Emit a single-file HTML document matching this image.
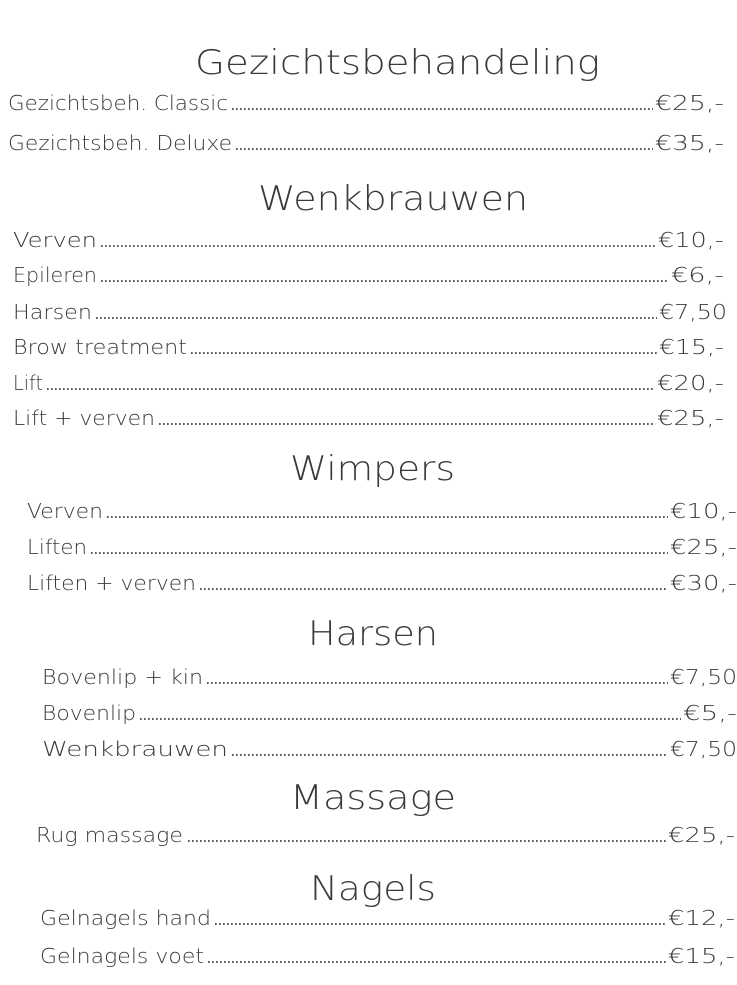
<!DOCTYPE html>
<html><head><meta charset="utf-8"><style>
html,body{margin:0;padding:0;background:#fff;width:737px;height:985px;overflow:hidden}
svg{display:block}
text{font-family:"DejaVu Sans","Liberation Sans",sans-serif;fill:#3a3a3a;font-weight:200}
.h{font-size:34px}
.r{font-size:20px}
line{stroke:#444;stroke-width:1.7;stroke-dasharray:1.7,2.3}
</style></head><body>
<svg width="737" height="985" viewBox="0 0 737 985">
<text class="h" x="195" y="74" textLength="405" lengthAdjust="spacingAndGlyphs">Gezichtsbehandeling</text>
<text class="h" x="258" y="210" textLength="270" lengthAdjust="spacingAndGlyphs">Wenkbrauwen</text>
<text class="h" x="290" y="480" textLength="165" lengthAdjust="spacingAndGlyphs">Wimpers</text>
<text class="h" x="308" y="645" textLength="130" lengthAdjust="spacingAndGlyphs">Harsen</text>
<text class="h" x="290" y="809" textLength="166" lengthAdjust="spacingAndGlyphs">Massage</text>
<text class="h" x="310" y="900" textLength="126" lengthAdjust="spacingAndGlyphs">Nagels</text>

<g class="rows">
<text class="r" x="8" y="110" textLength="220" lengthAdjust="spacingAndGlyphs">Gezichtsbeh. Classic</text><line x1="232" x2="653" y1="109" y2="109"/><text class="r" x="655" y="110" textLength="69" lengthAdjust="spacingAndGlyphs">€25,-</text>
<text class="r" x="8" y="150" textLength="224" lengthAdjust="spacingAndGlyphs">Gezichtsbeh. Deluxe</text><line x1="236" x2="653" y1="149" y2="149"/><text class="r" x="655" y="150" textLength="69" lengthAdjust="spacingAndGlyphs">€35,-</text>

<text class="r" x="13" y="247" textLength="84" lengthAdjust="spacingAndGlyphs">Verven</text><line x1="101" x2="656" y1="246" y2="246"/><text class="r" x="658" y="247" textLength="66" lengthAdjust="spacingAndGlyphs">€10,-</text>
<text class="r" x="13" y="282" textLength="84" lengthAdjust="spacingAndGlyphs">Epileren</text><line x1="101" x2="669" y1="281" y2="281"/><text class="r" x="671" y="282" textLength="53" lengthAdjust="spacingAndGlyphs">€6,-</text>
<text class="r" x="13" y="319" textLength="79" lengthAdjust="spacingAndGlyphs">Harsen</text><line x1="96" x2="657" y1="318" y2="318"/><text class="r" x="659" y="319" textLength="68" lengthAdjust="spacingAndGlyphs">€7,50</text>
<text class="r" x="13" y="354" textLength="174" lengthAdjust="spacingAndGlyphs">Brow treatment</text><line x1="191" x2="657" y1="353" y2="353"/><text class="r" x="659" y="354" textLength="65" lengthAdjust="spacingAndGlyphs">€15,-</text>
<text class="r" x="13" y="390" textLength="30" lengthAdjust="spacingAndGlyphs">Lift</text><line x1="47" x2="655" y1="389" y2="389"/><text class="r" x="657" y="390" textLength="67" lengthAdjust="spacingAndGlyphs">€20,-</text>
<text class="r" x="13" y="425" textLength="142" lengthAdjust="spacingAndGlyphs">Lift + verven</text><line x1="159" x2="655" y1="424" y2="424"/><text class="r" x="657" y="425" textLength="67" lengthAdjust="spacingAndGlyphs">€25,-</text>

<text class="r" x="27" y="518" textLength="76" lengthAdjust="spacingAndGlyphs">Verven</text><line x1="107" x2="668" y1="517" y2="517"/><text class="r" x="670" y="518" textLength="67" lengthAdjust="spacingAndGlyphs">€10,-</text>
<text class="r" x="27" y="554" textLength="60" lengthAdjust="spacingAndGlyphs">Liften</text><line x1="91" x2="668" y1="553" y2="553"/><text class="r" x="670" y="554" textLength="67" lengthAdjust="spacingAndGlyphs">€25,-</text>
<text class="r" x="27" y="590" textLength="169" lengthAdjust="spacingAndGlyphs">Liften + verven</text><line x1="200" x2="668" y1="589" y2="589"/><text class="r" x="670" y="590" textLength="67" lengthAdjust="spacingAndGlyphs">€30,-</text>

<text class="r" x="42" y="684" textLength="161" lengthAdjust="spacingAndGlyphs">Bovenlip + kin</text><line x1="207" x2="668" y1="683" y2="683"/><text class="r" x="670" y="684" textLength="67" lengthAdjust="spacingAndGlyphs">€7,50</text>
<text class="r" x="42" y="720" textLength="94" lengthAdjust="spacingAndGlyphs">Bovenlip</text><line x1="140" x2="681" y1="719" y2="719"/><text class="r" x="683" y="720" textLength="54" lengthAdjust="spacingAndGlyphs">€5,-</text>
<text class="r" x="42" y="756" textLength="186" lengthAdjust="spacingAndGlyphs">Wenkbrauwen</text><line x1="232" x2="668" y1="755" y2="755"/><text class="r" x="670" y="756" textLength="67" lengthAdjust="spacingAndGlyphs">€7,50</text>

<text class="r" x="36" y="842" textLength="147" lengthAdjust="spacingAndGlyphs">Rug massage</text><line x1="188" x2="666" y1="841" y2="841"/><text class="r" x="668" y="842" textLength="67" lengthAdjust="spacingAndGlyphs">€25,-</text>

<text class="r" x="40" y="925" textLength="171" lengthAdjust="spacingAndGlyphs">Gelnagels hand</text><line x1="215" x2="666" y1="924" y2="924"/><text class="r" x="668" y="925" textLength="67" lengthAdjust="spacingAndGlyphs">€12,-</text>
<text class="r" x="40" y="963" textLength="164" lengthAdjust="spacingAndGlyphs">Gelnagels voet</text><line x1="208" x2="666" y1="962" y2="962"/><text class="r" x="668" y="963" textLength="67" lengthAdjust="spacingAndGlyphs">€15,-</text>
</g>
</svg>
</body></html>
